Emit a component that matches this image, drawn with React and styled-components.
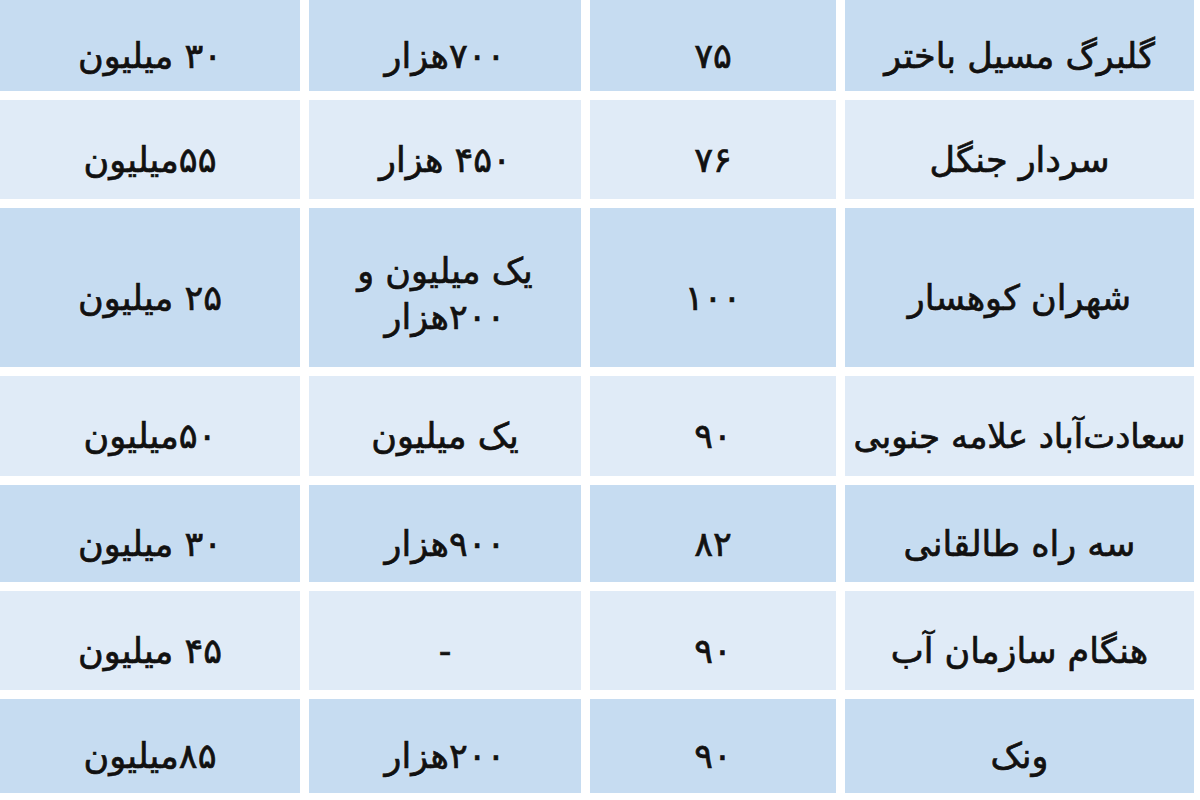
import React from 'react'
import styled, { createGlobalStyle } from 'styled-components'

const GlobalStyle = createGlobalStyle`
  html, body {
    margin: 0;
    padding: 0;
    background: #ffffff;
  }
  body {
    font-family: "DejaVu Sans", sans-serif;
  }
`

const rows = [
  { name: 'گلبرگ مسیل باختر', area: '۷۵', rent: '۷۰۰هزار', deposit: '۳۰ میلیون' },
  { name: 'سردار جنگل', area: '۷۶', rent: '۴۵۰ هزار', deposit: '۵۵میلیون' },
  { name: 'شهران کوهسار', area: '۱۰۰', rent: ['یک میلیون و', '۲۰۰هزار'], deposit: '۲۵ میلیون' },
  { name: 'سعادت‌آباد علامه جنوبی', area: '۹۰', rent: 'یک میلیون', deposit: '۵۰میلیون' },
  { name: 'سه راه طالقانی', area: '۸۲', rent: '۹۰۰هزار', deposit: '۳۰ میلیون' },
  { name: 'هنگام سازمان آب', area: '۹۰', rent: '-', deposit: '۴۵ میلیون' },
  { name: 'ونک', area: '۹۰', rent: '۲۰۰هزار', deposit: '۸۵میلیون' },
]

const Page = styled.main`
  width: 1200px;
  height: 800px;
  overflow: hidden;
  background: #ffffff;
`

const Table = styled.div`
  direction: rtl;
  display: grid;
  grid-template-columns: 349px 246px 272px 300px;
  grid-template-rows: 91px 99px 159px 100px 97px 99px 94px;
  column-gap: 9px;
  row-gap: 9px;
  padding: 0 6px 7px 0;
`

const Cell = styled.div`
  display: flex;
  align-items: center;
  justify-content: center;
  overflow: hidden;
  white-space: nowrap;
  padding: 20px 6px 0;
  background: ${(p) => (p.$dark ? '#c6dcf1' : '#e0ebf7')};
  color: #111111;
  font-size: 35px;
  font-weight: 400;
  line-height: 46px;
  text-align: center;
  -webkit-text-stroke: 0.7px #111111;
  text-shadow: 0 0 2px rgba(255, 255, 255, 0.7);
`

const NameCell = styled(Cell)`
  padding: 20px 4px 0;
  font-size: ${(p) => (p.$long ? '34px' : '35px')};
`

const Lines = styled.div`
  display: flex;
  flex-direction: column;
  align-items: center;
  margin-top: -8px;
`

const App = () => {
  return (
    <Page>
      <GlobalStyle />
      <Table>
        {rows.map((row, i) => {
          const dark = i % 2 === 0
          return (
            <React.Fragment key={i}>
              <NameCell $dark={dark} $long={row.name.length > 18}>
                {row.name}
              </NameCell>
              <Cell $dark={dark}>{row.area}</Cell>
              <Cell $dark={dark}>
                {Array.isArray(row.rent) ? (
                  <Lines>
                    {row.rent.map((line) => (
                      <span key={line}>{line}</span>
                    ))}
                  </Lines>
                ) : (
                  row.rent
                )}
              </Cell>
              <Cell $dark={dark}>{row.deposit}</Cell>
            </React.Fragment>
          )
        })}
      </Table>
    </Page>
  )
}

export default App
